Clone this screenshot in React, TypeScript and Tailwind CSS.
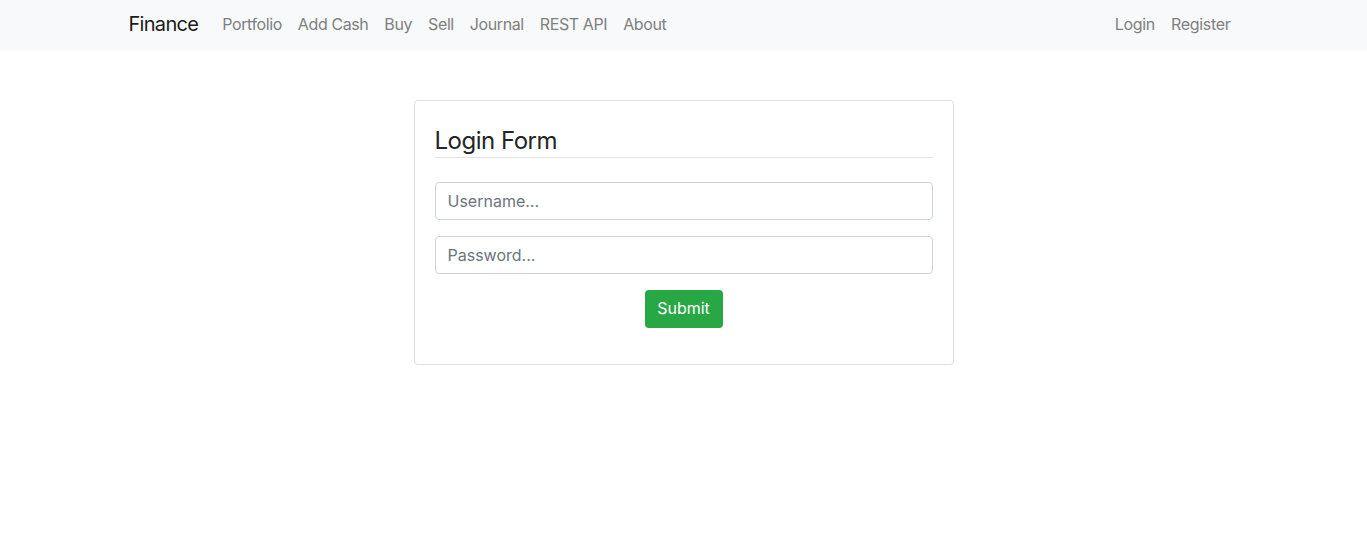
export default function App() {
  const links = ['Portfolio', 'Add Cash', 'Buy', 'Sell', 'Journal', 'REST API', 'About']

  return (
    <div className="min-h-screen bg-white text-[#212529] font-['Inter','Liberation_Sans',sans-serif]">
      {/* Navbar */}
      <nav className="bg-[#f8f9fa] h-[51px]">
        <div className="mx-auto max-w-[1140px] px-[15px] h-full flex items-center pb-[3px]">
          <a className="text-[20px] text-[#1a1a1a] mr-4 tracking-[-0.7px]" href="#">
            Finance
          </a>
          <ul className="flex">
            {links.map(link => (
              <li key={link}>
                <a className="px-2 text-[16px] text-[#7f7f80] tracking-[-0.4px]" href="#">
                  {link}
                </a>
              </li>
            ))}
          </ul>
          <ul className="flex ml-auto">
            <li>
              <a className="px-2 text-[16px] text-[#7f7f80] tracking-[-0.3px]" href="#">
                Login
              </a>
            </li>
            <li>
              <a className="px-2 text-[16px] text-[#7f7f80] tracking-[-0.3px]" href="#">
                Register
              </a>
            </li>
          </ul>
        </div>
      </nav>

      {/* Login card */}
      <div className="mx-auto max-w-[1140px] px-[15px] pt-[49px]">
        <div className="mx-auto w-[540px] border border-[#dfdfdf] rounded bg-white px-5 pt-5 pb-9">
          <h4 className="text-[24px] leading-[29px] pt-[5px] pb-[2px] border-b border-[#e3e3e3] tracking-[-0.5px]">
            Login Form
          </h4>
          <form className="mt-6 flex flex-col gap-4" onSubmit={e => e.preventDefault()}>
            <input
              className="h-[38px] w-full border border-[#ced4da] rounded px-3 text-[16px] placeholder:text-[#6c757d] outline-none"
              placeholder="Username..."
            />
            <input
              type="password"
              className="h-[38px] w-full border border-[#ced4da] rounded px-3 text-[16px] placeholder:text-[#6c757d] outline-none"
              placeholder="Password..."
            />
            <div className="flex justify-center">
              <button
                type="submit"
                className="h-[38px] w-[78px] bg-[#28a745] text-white rounded text-[16px] pb-[2px]"
              >
                Submit
              </button>
            </div>
          </form>
        </div>
      </div>
    </div>
  )
}
